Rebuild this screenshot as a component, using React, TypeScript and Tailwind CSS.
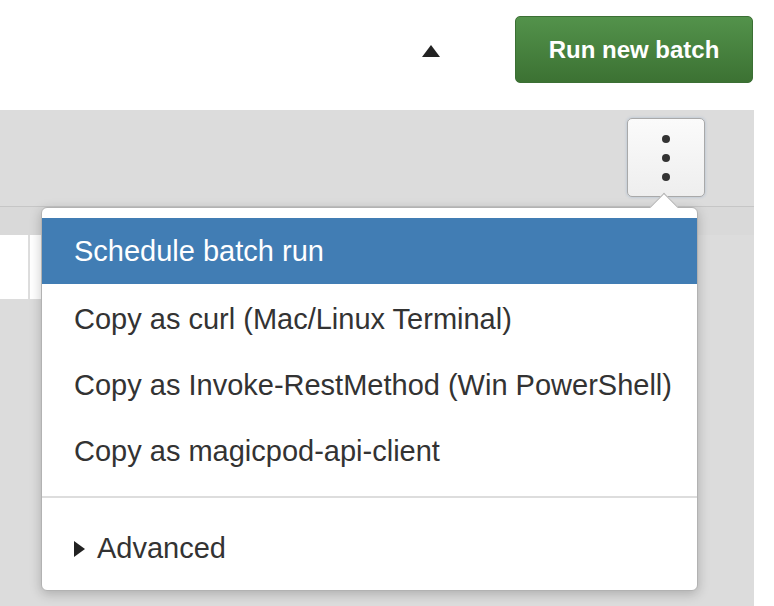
import React from "react";

const items = [
  "Copy as curl (Mac/Linux Terminal)",
  "Copy as Invoke-RestMethod (Win PowerShell)",
  "Copy as magicpod-api-client",
];

export default function App() {
  return (
    <div
      className="relative w-[774px] h-[606px] overflow-hidden bg-white flex flex-col"
      style={{ fontFamily: '"Liberation Sans", Arial, sans-serif' }}
    >
      {/* header */}
      <div className="h-[110px] shrink-0 flex items-start justify-end pr-[21px] pt-[16px]">
        <div className="mt-[29px] mr-[75px] w-0 h-0 border-l-[9px] border-r-[9px] border-b-[12px] border-l-transparent border-r-transparent border-b-[#222]" />
        <button className="w-[238px] h-[67px] rounded-[5px] border border-[#3b6f34] bg-gradient-to-b from-[#53924b] to-[#3c7233] text-white font-bold text-[24px] flex items-center justify-center">
          Run new batch
        </button>
      </div>

      {/* gray panel */}
      <div className="w-[754px] flex-1 bg-[#dcdcdc] flex flex-col">
        <div className="h-[97px] shrink-0 border-b border-[#c6c6c6] flex items-start justify-end pr-[49px] pt-[8px]">
          <div className="w-[78px] h-[79px] rounded-[5px] border border-[#a9a9a9] bg-gradient-to-b from-[#fbfbfb] to-[#eeeeee] shadow-[0_0_3px_rgba(110,150,200,0.45)] flex flex-col items-center justify-center gap-[11px]">
            <span className="w-[8px] h-[8px] rounded-full bg-[#333]" />
            <span className="w-[8px] h-[8px] rounded-full bg-[#333]" />
            <span className="w-[8px] h-[8px] rounded-full bg-[#333]" />
          </div>
        </div>
        <div className="h-[28px] shrink-0 bg-[#d9d9d9]" />
        <div className="h-[64px] shrink-0 w-[60px] flex">
          <div className="w-[28px] bg-white" />
          <div className="w-[2px] bg-[#dddddd]" />
          <div className="flex-1 bg-white" />
        </div>
      </div>

      {/* dropdown */}
      <div className="absolute left-[41px] top-[207px] w-[657px] h-[384px] rounded-[6px] border border-[#b2b2b2] bg-white shadow-[0_3px_12px_rgba(0,0,0,0.22)] pt-[10px] text-[#333] text-[29px] whitespace-nowrap">
        <div className="absolute left-[612px] top-[-11px] w-[20px] h-[20px] rotate-45 bg-white border-l border-t border-[#b2b2b2]" />
        <div className="relative h-[66px] bg-[#417db4] text-white flex items-center px-[32px] pt-[2px]">
          Schedule batch run
        </div>
        {items.map((t) => (
          <div key={t} className="h-[66px] flex items-center px-[32px] pt-[5px]">
            {t}
          </div>
        ))}
        <div className="mt-[14px] border-t-2 border-[#dddddd]" />
        <div className="h-[92px] flex items-center px-[32px] pt-[10px]">
          <span className="w-0 h-0 border-t-[8px] border-b-[8px] border-l-[11px] border-t-transparent border-b-transparent border-l-[#222] mr-[12px]" />
          Advanced
        </div>
      </div>
    </div>
  );
}
